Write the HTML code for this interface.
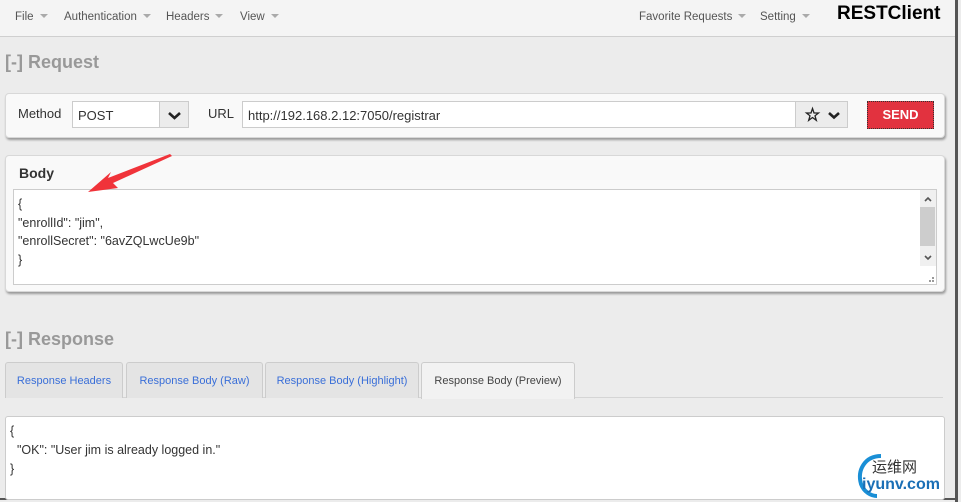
<!DOCTYPE html>
<html><head><meta charset="utf-8"><style>
*{box-sizing:border-box;margin:0;padding:0}
body{width:961px;height:502px;overflow:hidden;background:#ececec;font-family:"Liberation Sans",Arial,sans-serif;font-size:12px;color:#333;position:relative}
.a{position:absolute}
.nav{left:0;top:0;width:955px;height:37px;background:#f4f4f4;border-bottom:1px solid #cfcfcf}
.nav span{position:absolute;top:11px;color:#555;font-size:11.5px}
.nav span i{display:inline-block;width:0;height:0;border-left:4px solid transparent;border-right:4px solid transparent;border-top:4px solid #aaa;margin-left:6px;vertical-align:2px}
.h{font-size:18px;font-weight:bold;color:#999}
.panel{background:#f9f9f9;border:1px solid #d8d8d8;border-radius:4px;box-shadow:1px 2px 2px #999}
.inp{background:#fff;border:1px solid #ccc;font-size:13px;padding:6px 5px;height:27px}
.btn{background:#ececec;border-left:1px solid #ccc}
.tab{top:362px;height:36px;border:1px solid #ccc;border-bottom:none;background:#e4e4e4;border-radius:3px 3px 0 0;color:#3a6fd8;font-size:11px;text-align:center;line-height:36px}
</style></head><body>
<div class="a nav">
<span style="left:15px">File<i></i></span>
<span style="left:64px">Authentication<i></i></span>
<span style="left:166px">Headers<i></i></span>
<span style="left:240px">View<i></i></span>
<span style="left:639px">Favorite Requests<i></i></span>
<span style="left:760px">Setting<i></i></span>
<b style="position:absolute;left:837px;top:3px;font-size:19px;color:#000">RESTClient</b>
</div>
<div class="a" style="left:955px;top:0;width:3px;height:502px;background:#555"></div>
<div class="a" style="left:0;top:498px;width:958px;height:2px;background:#555"></div>
<div class="a h" style="left:5px;top:52px">[-] Request</div>
<div class="a panel" style="left:5px;top:93px;width:940px;height:45px"></div>
<div class="a" style="left:18px;top:106px;font-size:13px">Method</div>
<div class="a inp" style="left:72px;top:101px;width:117px">POST</div>
<div class="a btn" style="left:159px;top:102px;width:29px;height:25px"><svg width="29" height="25"><path d="M9 11 L14.5 16 L20 11" stroke="#222" stroke-width="2.6" fill="none"/></svg></div>
<div class="a" style="left:208px;top:106px;font-size:13px">URL</div>
<div class="a inp" style="left:242px;top:101px;width:606px">http://192.168.2.12:7050/registrar</div>
<div class="a btn" style="left:795px;top:102px;width:52px;height:25px"><svg width="52" height="25"><path d="M16.5 6.5 L18 11 L22.5 11 L19 13.8 L20.3 18.3 L16.5 15.5 L12.7 18.3 L14 13.8 L10.5 11 L15 11Z" stroke="#222" stroke-width="1.3" fill="none"/><path d="M33 11 L38 15.5 L43 11" stroke="#222" stroke-width="2.6" fill="none"/></svg></div>
<div class="a" style="left:867px;top:101px;width:67px;height:28px;background:#e2323f;border:1px dotted #333;color:#fff;font-size:13px;font-weight:bold;text-align:center;line-height:26px">SEND</div>
<div class="a panel" style="left:5px;top:155px;width:940px;height:137px"></div>
<div class="a" style="left:19px;top:165px;font-weight:bold;font-size:14px">Body</div>
<div class="a" style="left:13px;top:189px;width:924px;height:96px;background:#fff;border:1px solid #ccc;font-size:12.5px;line-height:18.5px;padding:5px 4px">{<br>"enrollId": "jim",<br>"enrollSecret": "6avZQLwcUe9b"<br>}</div>
<div class="a" style="left:920px;top:190px;width:16px;height:76px;background:#f0f0f0"></div>
<div class="a" style="left:920px;top:207px;width:15px;height:39px;background:#cdcdcd"></div>
<svg class="a" style="left:920px;top:190px" width="16" height="94"><path d="M5 11 L8 8 L11 11 M5 66 L8 69 L11 66" stroke="#555" stroke-width="1.6" fill="none"/><path d="M12 90h2v2h-2zM9 90h2v2h-2zM12 87h2v2h-2z" fill="#999"/></svg>
<svg class="a" style="left:80px;top:150px" width="100" height="50"><path d="M90 4 L28 28 L31 22 L8 42 L38 38 L33 33 L92 6Z" fill="#f0333a"/></svg>
<div class="a h" style="left:5px;top:329px">[-] Response</div>
<div class="a" style="left:5px;top:397px;width:938px;height:1px;background:#d5d5d5"></div>
<div class="a tab" style="left:5px;width:118px">Response Headers</div>
<div class="a tab" style="left:126px;width:137px">Response Body (Raw)</div>
<div class="a tab" style="left:265px;width:154px">Response Body (Highlight)</div>
<div class="a tab" style="left:421px;width:154px;background:#f2f2f2;color:#444;height:37px">Response Body (Preview)</div>
<div class="a" style="left:5px;top:416px;width:940px;height:84px;background:#fff;border:1px solid #ccc;border-radius:3px;font-size:12.5px;line-height:19px;padding:5px 4px">{<br>&nbsp;&nbsp;"OK": "User jim is already logged in."<br>}</div>
<svg class="a" style="left:855px;top:452px" width="30" height="46"><path d="M26 4 C10 4 2 18 6 32 C9 40 16 44 22 44" stroke="#1a8fd6" stroke-width="4" fill="none"/></svg>
<div class="a" style="left:872px;top:456px;font-family:'Noto Sans CJK SC',sans-serif;font-size:15px;color:#333">运维网</div>
<div class="a" style="left:862px;top:476px;font-size:16px;font-weight:bold;color:#1a6fb6">iyunv.com</div>
</body></html>
